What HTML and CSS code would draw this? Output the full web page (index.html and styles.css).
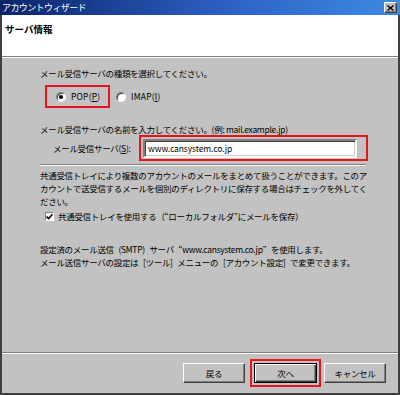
FILE: index.html
```html
<!DOCTYPE html>
<html lang="ja">
<head>
  <meta charset="UTF-8" />
  <title>アカウントウィザード</title>
  <link rel="stylesheet" href="styles.css">
</head>
<body>
  <div class="ventana">
    <div class="barra-titulo">
      <span class="titulo">アカウントウィザード</span>
      <span class="cerrar">
        <svg width="7" height="6" viewBox="0 0 7 6"><path d="M0.5 0.5 L6.5 5.5 M6.5 0.5 L0.5 5.5" stroke="#000" stroke-width="1.4" fill="none"/></svg>
      </span>
    </div>
    <div class="cabecera">
      <h1>サーバ情報</h1>
    </div>
    <div class="cuerpo">
      <p class="linea primera">メール受信サーバの種類を選択してください。</p>
      <div class="radios">
        <label class="radio marca"><span class="punto activo"></span>POP(<u>P</u>)</label>
        <label class="radio"><span class="punto"></span>IMAP(<u>I</u>)</label>
      </div>
      <p class="linea nombre">メール受信サーバの名前を入力してください。(例: mail.example.jp)</p>
      <div class="campo">
        <span class="etiqueta">メール受信サーバ(<u>S</u>):</span>
        <div class="marca caja">
          <div class="entrada">www.cansystem.co.jp</div>
        </div>
      </div>
      <div class="separador"></div>
      <p class="parrafo">共通受信トレイにより複数のアカウントのメールをまとめて扱うことができます。このア<br>カウントで送受信するメールを個別のディレクトリに保存する場合はチェックを外してく<br>ださい。</p>
      <label class="check">
        <span class="casilla">
          <svg width="7" height="7" viewBox="0 0 7 7"><path d="M0.5 3.5 L2.6 5.6 L6.5 1.2" stroke="#000" stroke-width="1.6" fill="none"/></svg>
        </span>
        共通受信トレイを使用する（“ローカルフォルダ”にメールを保存）
      </label>
      <p class="parrafo smtp">設定済のメール送信 (SMTP) サーバ “www.cansystem.co.jp” を使用します。<br>メール送信サーバの設定は [ツール] メニューの [アカウント設定] で変更できます。</p>
    </div>
    <div class="pie">
      <button class="boton">戻る</button>
      <div class="marca envoltura"><button class="boton defecto">次へ</button></div>
      <button class="boton">キャンセル</button>
    </div>
  </div>
</body>
</html>
```

FILE: styles.css
```css
* { box-sizing: border-box; }
body {
  margin: 0; background: #404040;
  font-family: "Noto Sans CJK JP", "Noto Sans", sans-serif;
  font-size: 8.5px; letter-spacing: -0.3px; color: #000;
}
.ventana {
  width: 400px; height: 395px; background: #c2c2c2;
  border: 2px solid #404040; border-top: 0;
  display: flex; flex-direction: column;
}
.barra-titulo {
  height: 15px; flex-shrink: 0; display: flex; align-items: center;
  padding: 0 1px 0 1px; margin: 0 -2px;
  background: linear-gradient(to right, #0a246a, #2f64c8 60%, #3c8ae2);
}
.titulo { color: #fff; font-size: 9px; letter-spacing: -0.6px; line-height: 15px; padding-left: 1px; }
.cerrar {
  margin-left: auto; margin-right: 2px; width: 13px; height: 11px;
  background: #c0c0c0; display: flex; align-items: center; justify-content: center;
  border: 1px solid; border-color: #fff #404040 #404040 #fff;
  box-shadow: inset -1px -1px #808080;
}
.cabecera {
  height: 42px; flex-shrink: 0; background: #fff;
  border-bottom: 1px solid #808080; padding: 8px 0 0 3px;
}
.cabecera h1 { margin: 0; font-size: 9.5px; font-weight: bold; line-height: 13px; letter-spacing: 0; }
.cuerpo {
  flex: 1; border-top: 1px solid #fff; padding: 9px 0 0 38px;
}
p { margin: 0; line-height: 13px; white-space: nowrap; }
.marca { border: 2px solid #e8141c; }
.radios { display: flex; align-items: center; margin-top: 5px; height: 23px; }
.radio { display: flex; align-items: center; line-height: 13px; letter-spacing: 0.2px; }
.radio.marca { height: 23px; width: 65px; margin-left: 5px; padding: 0 0 0 9px; }
.radio + .radio { margin-left: 6px; }
.punto {
  width: 10px; height: 10px; border-radius: 50%; background: #fff; margin-right: 5px;
  border: 1px solid; border-color: #808080 #fff #fff #808080;
  box-shadow: inset 1px 1px #404040;
  display: flex; align-items: center; justify-content: center;
}
.punto.activo::after { content: ''; width: 4px; height: 4px; border-radius: 50%; background: #000; }
.nombre { margin-top: 15px; line-height: 12px; }
.campo { display: flex; align-items: center; height: 26px; }
.etiqueta { width: 86px; margin-left: 13px; flex-shrink: 0; line-height: 13px; }
.caja { width: 229px; height: 26px; padding: 2px 9px 1px 2px; }
.entrada {
  height: 19px; background: #fff; line-height: 15px; padding-left: 3px;
  border: 2px solid; border-color: #808080 #fff #fff #808080;
  box-shadow: inset 1px 1px #404040, inset -1px -1px #d4d0c8;
  letter-spacing: -0.1px;
}
.separador {
  width: 326px; margin-top: 3px; height: 2px;
  border-top: 1px solid #808080; border-bottom: 1px solid #fff;
}
.parrafo { margin-top: 3px; }
.check { display: flex; align-items: center; line-height: 13px; margin-top: 2px; padding-left: 5px; white-space: nowrap; }
.casilla {
  width: 9px; height: 9px; background: #fff; margin-right: 4px;
  border: 1px solid; border-color: #808080 #fff #fff #808080;
  display: flex; align-items: center; justify-content: center;
}
.smtp { margin-top: 20px; word-spacing: 3px; }
.pie {
  height: 41px; flex-shrink: 0; border-top: 1px solid #808080;
  box-shadow: inset 0 1px #fff;
  display: flex; align-items: center; justify-content: flex-end; padding-right: 12px;
}
.boton {
  width: 62px; height: 20px; padding: 0; background: #c2c2c2;
  font-family: inherit; font-size: 8.5px; letter-spacing: -0.3px; color: #000;
  border: 1px solid; border-color: #fff #404040 #404040 #fff;
  box-shadow: inset -1px -1px #808080;
}
.envoltura { padding: 2px; margin: 0 3px 0 5px; }
.boton.defecto {
  width: 63px; border: 1px solid #000;
  box-shadow: inset 1px 1px #fff, inset -1px -1px #404040, inset -2px -2px #808080;
}
```
